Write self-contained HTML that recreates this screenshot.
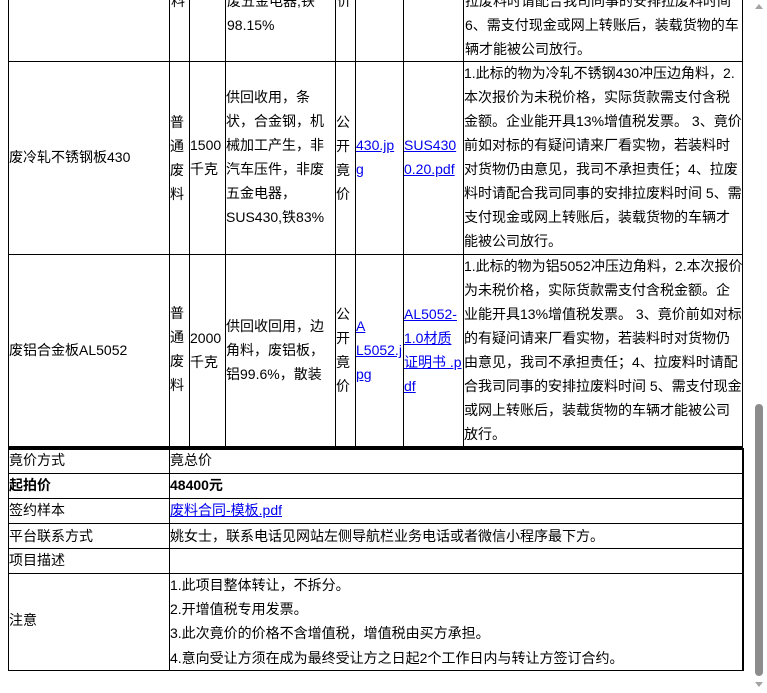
<!DOCTYPE html>
<html><head><meta charset="utf-8"><style>
body{margin:0;width:767px;height:693px;overflow:hidden;background:#fff;font-family:"Liberation Sans","Noto Sans CJK SC",sans-serif;font-size:14px;color:#000;position:relative}
.h{position:absolute;height:1px;background:#000}
.v{position:absolute;width:1px;background:#000}
.t{position:absolute;height:24px;line-height:24px;white-space:nowrap}
a,.a{color:#00e;text-decoration:underline}
</style></head><body>
<div class="v" style="left:8px;top:0;height:448px"></div>
<div class="v" style="left:169px;top:0;height:447px"></div>
<div class="v" style="left:189px;top:0;height:447px"></div>
<div class="v" style="left:225px;top:0;height:447px"></div>
<div class="v" style="left:335px;top:0;height:447px"></div>
<div class="v" style="left:355px;top:0;height:447px"></div>
<div class="v" style="left:403px;top:0;height:447px"></div>
<div class="v" style="left:463px;top:0;height:447px"></div>
<div class="v" style="left:742px;top:0;height:448px"></div>
<div class="h" style="left:8px;top:61px;width:735px"></div>
<div class="h" style="left:8px;top:254px;width:735px"></div>
<div class="h" style="left:8px;top:446px;width:735px;height:2px"></div>
<div class="h" style="left:8px;top:448px;width:735px;height:2px"></div>
<div class="v" style="left:8px;top:448px;height:223px"></div>
<div class="v" style="left:169px;top:448px;height:223px"></div>
<div class="v" style="left:742px;top:448px;height:223px;width:2px"></div>
<div class="h" style="left:8px;top:473px;width:735px"></div>
<div class="h" style="left:8px;top:498px;width:735px"></div>
<div class="h" style="left:8px;top:523px;width:735px"></div>
<div class="h" style="left:8px;top:548px;width:735px"></div>
<div class="h" style="left:8px;top:573px;width:735px"></div>
<div class="h" style="left:8px;top:670px;width:735px"></div>

<div class="t" style="left:171px;top:-11px">料</div>
<div class="t" style="left:227px;top:-11px">废五金电器,铁</div>
<div class="t" style="left:227px;top:13px">98.15%</div>
<div class="t" style="left:337px;top:-11px">价</div>
<div class="t" style="left:465px;top:-11px">拉废料时请配合我司同事的安排拉废料时间</div>
<div class="t" style="left:465px;top:13px">6、需支付现金或网上转账后，装载货物的车</div>
<div class="t" style="left:465px;top:37px">辆才能被公司放行。</div>

<div class="t" style="left:9px;top:145px">废冷轧不锈钢板430</div>
<div class="t" style="left:170px;top:110px">普</div>
<div class="t" style="left:170px;top:134px">通</div>
<div class="t" style="left:170px;top:158px">废</div>
<div class="t" style="left:170px;top:182px">料</div>
<div class="t" style="left:190px;top:133px">1500</div>
<div class="t" style="left:190px;top:157px">千克</div>
<div class="t" style="left:226px;top:85px">供回收用，条</div>
<div class="t" style="left:226px;top:109px">状，合金钢，机</div>
<div class="t" style="left:226px;top:133px">械加工产生，非</div>
<div class="t" style="left:226px;top:157px">汽车压件，非废</div>
<div class="t" style="left:226px;top:181px">五金电器，</div>
<div class="t" style="left:226px;top:205px">SUS430,铁83%</div>
<div class="t" style="left:336px;top:110px">公</div>
<div class="t" style="left:336px;top:134px">开</div>
<div class="t" style="left:336px;top:158px">竟</div>
<div class="t" style="left:336px;top:182px">价</div>
<div class="t a" style="left:356px;top:133px">430.jp</div>
<div class="t a" style="left:356px;top:157px">g</div>
<div class="t a" style="left:404px;top:133px">SUS430</div>
<div class="t a" style="left:404px;top:157px">0.20.pdf</div>
<div class="t" style="left:464px;top:61px">1.此标的物为冷轧不锈钢430冲压边角料，2.</div>
<div class="t" style="left:464px;top:85px">本次报价为未税价格，实际货款需支付含税</div>
<div class="t" style="left:464px;top:109px">金额。企业能开具13%增值税发票。 3、竟价</div>
<div class="t" style="left:464px;top:133px">前如对标的有疑问请来厂看实物，若装料时</div>
<div class="t" style="left:464px;top:157px">对货物仍由意见，我司不承担责任；4、拉废</div>
<div class="t" style="left:464px;top:181px">料时请配合我司同事的安排拉废料时间 5、需</div>
<div class="t" style="left:464px;top:205px">支付现金或网上转账后，装载货物的车辆才</div>
<div class="t" style="left:464px;top:229px">能被公司放行。</div>

<div class="t" style="left:9px;top:338px">废铝合金板AL5052</div>
<div class="t" style="left:170px;top:301px">普</div>
<div class="t" style="left:170px;top:325px">通</div>
<div class="t" style="left:170px;top:349px">废</div>
<div class="t" style="left:170px;top:373px">料</div>
<div class="t" style="left:190px;top:326px">2000</div>
<div class="t" style="left:190px;top:350px">千克</div>
<div class="t" style="left:226px;top:314px">供回收回用，边</div>
<div class="t" style="left:226px;top:338px">角料，废铝板，</div>
<div class="t" style="left:226px;top:362px">铝99.6%，散装</div>
<div class="t" style="left:336px;top:302px">公</div>
<div class="t" style="left:336px;top:326px">开</div>
<div class="t" style="left:336px;top:350px">竟</div>
<div class="t" style="left:336px;top:374px">价</div>
<div class="t a" style="left:356px;top:314px">A</div>
<div class="t a" style="left:356px;top:338px">L5052.j</div>
<div class="t a" style="left:356px;top:362px">pg</div>
<div class="t a" style="left:404px;top:302px">AL5052-</div>
<div class="t a" style="left:404px;top:326px">1.0材质</div>
<div class="t a" style="left:404px;top:350px">证明书 .p</div>
<div class="t a" style="left:404px;top:374px">df</div>
<div class="t" style="left:464px;top:254px">1.此标的物为铝5052冲压边角料，2.本次报价</div>
<div class="t" style="left:464px;top:278px">为未税价格，实际货款需支付含税金额。企</div>
<div class="t" style="left:464px;top:302px">业能开具13%增值税发票。 3、竟价前如对标</div>
<div class="t" style="left:464px;top:326px">的有疑问请来厂看实物，若装料时对货物仍</div>
<div class="t" style="left:464px;top:350px">由意见，我司不承担责任；4、拉废料时请配</div>
<div class="t" style="left:464px;top:374px">合我司同事的安排拉废料时间 5、需支付现金</div>
<div class="t" style="left:464px;top:398px">或网上转账后，装载货物的车辆才能被公司</div>
<div class="t" style="left:464px;top:422px">放行。</div>

<div class="t" style="left:9px;top:448px">竟价方式</div>
<div class="t" style="left:170px;top:448px">竟总价</div>
<div class="t" style="left:9px;top:473px;font-weight:bold">起拍价</div>
<div class="t" style="left:170px;top:473px;font-weight:bold">48400元</div>
<div class="t" style="left:9px;top:498px">签约样本</div>
<div class="t a" style="left:170px;top:498px">废料合同-模板.pdf</div>
<div class="t" style="left:9px;top:524px">平台联系方式</div>
<div class="t" style="left:170px;top:524px">姚女士，联系电话见网站左侧导航栏业务电话或者微信小程序最下方。</div>
<div class="t" style="left:9px;top:548px">项目描述</div>
<div class="t" style="left:9px;top:608px">注意</div>
<div class="t" style="left:170px;top:573px">1.此项目整体转让，不拆分。</div>
<div class="t" style="left:170px;top:597px">2.开增值税专用发票。</div>
<div class="t" style="left:170px;top:621px">3.此次竟价的价格不含增值税，增值税由买方承担。</div>
<div class="t" style="left:170px;top:646px">4.意向受让方须在成为最终受让方之日起2个工作日内与转让方签订合约。</div>

<div style="position:absolute;left:755px;top:4px;width:0;height:0;border-left:4px solid transparent;border-right:4px solid transparent;border-bottom:5px solid #a3a3a3"></div>
<div style="position:absolute;left:755px;top:404px;width:8px;height:272px;background:#8c8c8c;border-radius:4px"></div>
<div style="position:absolute;left:755px;top:682px;width:0;height:0;border-left:4px solid transparent;border-right:4px solid transparent;border-top:5px solid #a3a3a3"></div>
</body></html>
